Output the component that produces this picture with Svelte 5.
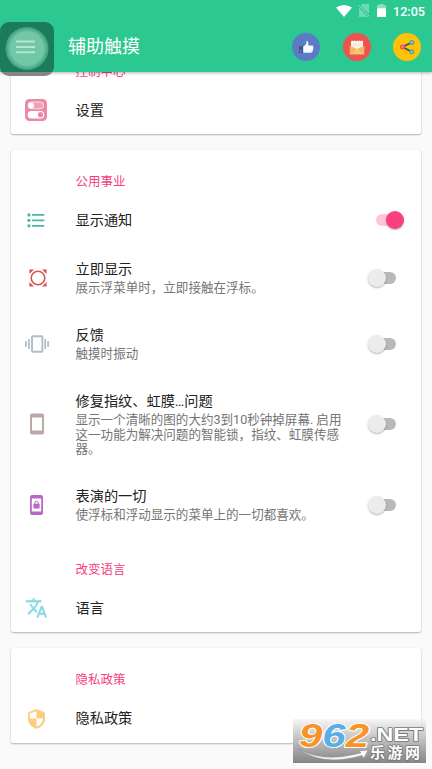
<script>
  const cards = [
    { title: '控制中心', rows: [{ icon: 'settings', title: '设置', h: 49 }] },
    {
      title: '公用事业',
      rows: [
        { icon: 'list', title: '显示通知', sw: 'on', h: 50 },
        { icon: 'focus', title: '立即显示', text: ['展示浮菜单时，立即接触在浮标。'], sw: 'off', h: 65 },
        { icon: 'vibrate', title: '反馈', text: ['触摸时振动'], sw: 'off', h: 67 },
        {
          icon: 'phone',
          title: '修复指纹、虹膜…问题',
          text: ['显示一个清晰的图的大约3到10秒钟掉屏幕. 启用', '这一功能为解决问题的智能锁，指纹、虹膜传感', '器。'],
          sw: 'off',
          h: 94
        },
        { icon: 'lock', title: '表演的一切', text: ['使浮标和浮动显示的菜单上的一切都喜欢。'], sw: 'off', h: 67 },
        { category: '改变语言' },
        { icon: 'translate', title: '语言', h: 49 }
      ]
    },
    { title: '隐私政策', rows: [{ icon: 'shield', title: '隐私政策', h: 50 }] }
  ];
</script>

<div class="screen">
  <header>
    <div class="status">
      <svg width="16" height="12" viewBox="0 0 16 12"><path d="M0 2.6Q8-2.4 16 2.6L8 12Z" fill="#fff" /></svg>
      <svg class="sim" width="12" height="13" viewBox="0 0 12 13"><path d="M4 0h7v9.5L3 2ZM1 4l9 9H1Z" fill="#fff" opacity=".32" /><path d="M.5 1l11 11.5" stroke="#8fe0c1" stroke-width="1" /></svg>
      <svg class="battery" width="9" height="13" viewBox="0 0 9 13"><path d="M2.5 0h4v1.3H9V5H0V1.3h2.5Z" fill="#8fe0c1" /><path d="M0 4.3h9V13H0Z" fill="#fff" /></svg>
      <span>12:05</span>
    </div>
    <div class="bar">
      <h1>辅助触摸</h1>
      <div class="actions">
        <svg viewBox="0 0 28 28" width="28" height="28"><circle cx="14" cy="14" r="14" fill="#5c7bc5" /><path d="M7 13.2h4.2v6.8H7z" fill="#40588f" /><path d="M8 18h1.4" stroke="#a8bce4" /><path d="M11.2 13.7 14.3 11V8.3q1.7-.6 2 1.3v3h4q1.5.3.9 1.7.5.8-.1 1.6.3.9-.4 1.5.2 1-.7 1.5l-1 .8h-7.8Z" fill="#f4f8ff" /></svg>
        <svg viewBox="0 0 28 28" width="28" height="28"><circle cx="14" cy="14" r="14" fill="#ee534f" /><path d="M8 8.2l1.3-.7 1.2.7 1.2-.7 1.2.7 1.2-.7 1.2.7 1.2-.7 1.2.7 1.2-.7 1.1.7V18H8Z" fill="#fff5ed" /><path d="M10 11h8M10 13h8" stroke="#e5d8d0" stroke-width=".7" /><path d="M6.7 12.7 14 16l7.3-3.3v8.6H6.7Z" fill="#efb760" /><path d="M6.7 21.3 14 15.7l7.3 5.6Z" fill="#f5c56f" /></svg>
        <svg viewBox="0 0 28 28" width="28" height="28"><circle cx="14" cy="14" r="14" fill="#ffc208" /><path d="M19 9.3 9.4 14l9.6 5" fill="none" stroke="#3d5058" stroke-width="1.7" /><circle cx="18.8" cy="9.5" r="2.5" fill="#4ba99e" /><circle cx="18.8" cy="18.8" r="2.5" fill="#4ba99e" /><circle cx="18.8" cy="9.5" r=".9" fill="#a3ddd4" /><circle cx="18.8" cy="18.8" r=".9" fill="#a3ddd4" /><circle cx="9.4" cy="14" r="2.5" fill="#f05b51" /><circle cx="9.4" cy="14" r=".8" fill="#ffad9e" /></svg>
      </div>
    </div>
  </header>

  <main>
    {#each cards as card}
      <section>
        <h2>{card.title}</h2>
        {#each card.rows as row}
          {#if row.category}
            <h2>{row.category}</h2>
          {:else}
            <div class="row" style="height: {row.h}px">
              <div class="icon {row.icon}">
                {#if row.icon === 'settings'}
                  <svg width="22" height="22" viewBox="0 0 22 22"><rect width="22" height="22" rx="4.5" fill="#ec87a5" /><rect x="3" y="3" width="15.7" height="6.8" rx="3.4" fill="#f2a0b8" stroke="#fbe0e8" /><circle cx="6.2" cy="6.4" r="2.9" fill="#fff" /><rect x="2.6" y="12" width="16.6" height="7.5" rx="3.75" fill="#fff" /><circle cx="15.5" cy="15.7" r="2.6" fill="#ec87a5" /></svg>
                {:else if row.icon === 'list'}
                  <svg width="18" height="15" viewBox="0 0 18 15"><g fill="#50b3a9"><circle cx="1.9" cy="1.9" r="1.6" /><circle cx="1.9" cy="7.3" r="1.6" /><circle cx="1.9" cy="12.8" r="1.6" /><path d="M5 1h12.3v1.8H5zM5 6.4h12.3v1.8H5zM5 11.9h12.3v1.8H5z" /></g></svg>
                {:else if row.icon === 'focus'}
                  <svg width="18" height="18" viewBox="0 0 18 18"><circle cx="9" cy="9" r="6.8" fill="none" stroke="#da5350" stroke-width="1.6" /><path d="M.4.4H5L.4 5ZM17.6.4H13L17.6 5ZM.4 17.6H5L.4 13ZM17.6 17.6H13L17.6 13Z" fill="#da5350" /></svg>
                {:else if row.icon === 'vibrate'}
                  <svg width="24" height="18" viewBox="0 0 24 18"><rect x="7" y="1.2" width="10.4" height="15.6" rx=".8" fill="none" stroke="#afbec6" stroke-width="1.9" /><path d="M.9 6v6M3.9 4v10M20.3 4v10M23.2 6v6" stroke="#afbec6" stroke-width="1.7" /></svg>
                {:else if row.icon === 'phone'}
                  <svg width="14" height="22" viewBox="0 0 14 22"><path fill-rule="evenodd" d="M2 .5h10q2 0 2 2v17q0 2-2 2H2q-2 0-2-2v-17q0-2 2-2ZM2 4.5v13h10v-13Z" fill="#bca9a3" /></svg>
                {:else if row.icon === 'lock'}
                  <svg width="13" height="20" viewBox="0 0 13 20"><path fill-rule="evenodd" d="M2 0h9q2 0 2 2v16q0 2-2 2H2q-2 0-2-2V2Q0 0 2 0ZM1.8 3.6v12.8h9.4V3.6Z" fill="#b868c6" /><rect x="3.4" y="8.8" width="6.2" height="4.8" rx=".7" fill="#b868c6" /><path d="M4.8 9V7.9a1.7 1.7 0 0 1 3.4 0V9" fill="none" stroke="#b868c6" stroke-width="1" /></svg>
                {:else if row.icon === 'translate'}
                  <svg width="21" height="20" viewBox="1 2 22 20"><path d="M12.87 15.07l-2.54-2.51.03-.03c1.74-1.94 2.98-4.17 3.71-6.53H17V4h-7V2H8v2H1v1.99h11.17C11.5 7.92 10.44 9.75 9 11.35 8.07 10.32 7.3 9.19 6.69 8h-2c.73 1.63 1.73 3.17 2.98 4.56l-5.09 5.02L4 19l5-5 3.11 3.11.76-2.04zM18.5 10h-2L12 22h2l1.12-3h4.75L21 22h2l-4.5-12zm-2.62 7l1.62-4.33L19.12 17h-3.24z" fill="#83dbe5" stroke="#83dbe5" stroke-width=".2" /></svg>
                {:else}
                  <svg width="17" height="20" viewBox="0 0 17 20"><path d="M8.5 0 17 3.5v6c0 5-3.5 9-8.5 10.3C3.5 18.5 0 14.5 0 9.5v-6Z" fill="#ffcb80" /><path d="M8.5 2.2V9.5H1.8V4.6ZM8.5 9.5h6.6c-.5 4-3 7-6.6 8.2Z" fill="#fff" /></svg>
                {/if}
              </div>
              <div class="label">
                <div class="title">{row.title}</div>
                {#if row.text}
                  <div class="text">
                    {#each row.text as line}<div>{line}</div>{/each}
                  </div>
                {/if}
              </div>
              {#if row.sw}
                <div class="switch {row.sw}"><i></i></div>
              {/if}
            </div>
          {/if}
        {/each}
      </section>
    {/each}
  </main>

  <div class="touch">
    <svg width="54" height="55" viewBox="0 0 54 55"><circle cx="27" cy="26.5" r="21.5" fill="#45a784" /><circle cx="27" cy="26.5" r="19.5" fill="#5eb897" /><circle cx="27" cy="26.5" r="17.3" fill="#72c7a9" /><path d="M16 19.5h19M16 25h19M16 30.3h19" stroke="#b8e4d4" stroke-width="2" /></svg>
  </div>

  <div class="watermark">
    <svg width="133" height="44" viewBox="0 0 133 44">
      <defs><linearGradient id="swoosh"><stop offset="0" stop-color="#ddd" /><stop offset="1" stop-color="#fff" /></linearGradient></defs>
      <g class="digits" font-size="34" stroke="#fff" stroke-width="2" paint-order="stroke" stroke-linejoin="round">
        <text x="6" y="27.5" textLength="70" lengthAdjust="spacingAndGlyphs"><tspan fill="#f79428">9</tspan><tspan fill="#5aaee6">6</tspan><tspan fill="#f79428">2</tspan></text>
      </g>
      <path d="M6 30Q30 44 68 34L66 32 75 31 71 39 69 36.5Q29 48 6 30Z" fill="url(#swoosh)" stroke="#888" stroke-width=".5" />
      <g fill="#fff" stroke="#777" stroke-width="1.6" paint-order="stroke" stroke-linejoin="round" font-weight="700">
        <text x="77" y="22" font-family="Liberation Sans, sans-serif" font-size="19" textLength="53" lengthAdjust="spacingAndGlyphs">.NET</text>
        <text x="77" y="39" font-family="Noto Sans CJK SC, sans-serif" font-size="15" textLength="50">乐游网</text>
      </g>
    </svg>
  </div>
</div>

<style>
  :global(body) { background: #fafafa; }
  .screen {
    position: relative;
    width: 432px;
    height: 769px;
    overflow: hidden;
    background: #fafafa;
    font-family: Roboto, 'Noto Sans CJK SC', sans-serif;
  }
  header {
    position: relative;
    z-index: 2;
    height: 72px;
    background: #2cc892;
    color: #fff;
    box-shadow: 0 1px 3px rgba(0, 0, 0, 0.3);
  }
  .status {
    display: flex;
    justify-content: flex-end;
    align-items: center;
    height: 22px;
    padding-right: 7px;
  }
  .status svg { margin-top: -1px; }
  .status .sim { margin-left: 6px; }
  .status .battery { margin-left: 7px; }
  .status span {
    width: 32px;
    margin: 1px 0 0 7px;
    font-size: 12.6px;
    font-weight: 500;
    line-height: 22px;
  }
  .bar {
    display: flex;
    align-items: center;
    justify-content: space-between;
    height: 50px;
    padding: 0 11px 0 68px;
  }
  h1 {
    margin: 0;
    font-size: 18px;
    font-weight: 400;
    line-height: 26px;
  }
  .actions { display: flex; gap: 22.5px; }
  main {
    display: flex;
    flex-direction: column;
    gap: 16px;
    margin-top: -32px;
    padding: 0 11px;
  }
  section {
    background: #fff;
    border-radius: 2px;
    box-shadow: 0 1px 2px rgba(0, 0, 0, 0.28), 0 0 1px rgba(0, 0, 0, 0.15);
  }
  h2 {
    box-sizing: border-box;
    height: 45px;
    margin: 0;
    padding: 22px 0 0 64.5px;
    color: #f5417f;
    font-size: 12.5px;
    font-weight: 400;
    line-height: 20px;
  }
  .row { display: flex; align-items: center; }
  .icon {
    display: flex;
    justify-content: center;
    width: 50px;
    margin-right: 14.5px;
  }
  .icon svg { position: relative; }
  .focus svg { left: 2px; }
  .vibrate svg, .phone svg { left: 1px; }
  .shield svg { top: 0.5px; }
  .label { flex: 1; white-space: nowrap; }
  .title {
    color: #212121;
    font-size: 14.2px;
    line-height: 20px;
  }
  .text {
    margin-top: 2px;
    color: #757575;
    font-size: 12.55px;
    line-height: 14.8px;
  }
  .switch {
    position: relative;
    width: 25px;
    height: 12px;
    margin-right: 25px;
    border-radius: 6px;
    background: #b9b9b9;
  }
  .switch i {
    position: absolute;
    top: -3px;
    left: -3px;
    width: 18px;
    height: 18px;
    border-radius: 50%;
    background: #ececec;
    box-shadow: 0 1px 2px rgba(0, 0, 0, 0.3);
  }
  .switch.on { margin-right: 20px; background: #ffc5d9; }
  .switch.on i { left: 9.5px; background: #fb4080; }
  .touch {
    position: absolute;
    z-index: 3;
    top: 22px;
    left: 0;
    width: 54px;
    height: 54px;
    border-radius: 9px;
    background: linear-gradient(#1c7b5a 0 50px, #858585 50px);
  }
  .watermark {
    position: absolute;
    z-index: 3;
    left: 293px;
    top: 719px;
    width: 133px;
    height: 44px;
    background: linear-gradient(rgba(240, 240, 240, 0.6), #bcbcbc 50%, #858585);
  }
  .watermark svg { display: block; overflow: visible; }
  .digits {
    font-family: 'Liberation Sans', sans-serif;
    font-weight: 700;
    font-style: italic;
  }
</style>
